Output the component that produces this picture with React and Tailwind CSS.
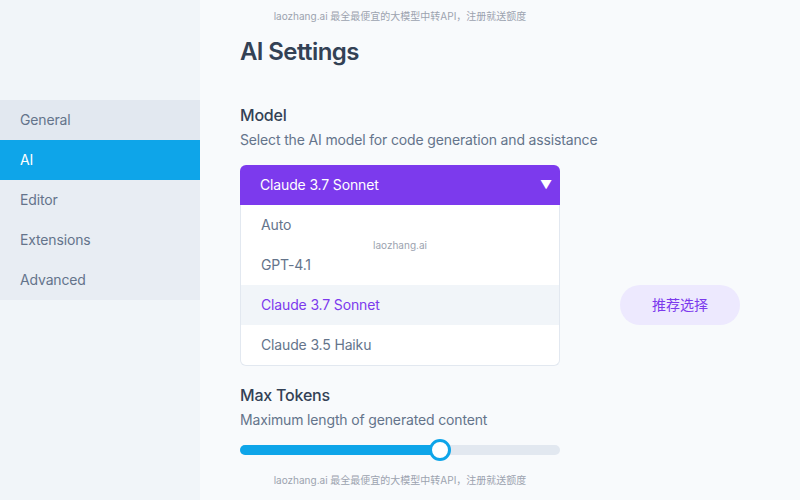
import React, { useState } from 'react';

const NAV = ['General', 'AI', 'Editor', 'Extensions', 'Advanced'];
const MODELS = ['Auto', 'GPT-4.1', 'Claude 3.7 Sonnet', 'Claude 3.5 Haiku'];
const WATERMARK = 'laozhang.ai 最全最便宜的大模型中转API，注册就送额度';

const Sidebar = ({ active }) => (
  <aside className="w-[200px] shrink-0 bg-[#f1f5f9] pt-[100px]">
    {NAV.map((item) => (
      <div
        key={item}
        className={`h-10 flex items-center px-5 text-sm tracking-[-0.15px] ${
          item === active
            ? 'bg-[#0ea5e9] text-white'
            : item === 'General'
              ? 'bg-[#e2e8f0] text-[#64748b]'
              : 'bg-[#e8edf3] text-[#64748b]'
        }`}
      >
        {item}
      </div>
    ))}
  </aside>
);

export default function App() {
  const [model] = useState('Claude 3.7 Sonnet');
  const tokens = 62.5; // percent of slider

  return (
    <div
      className="relative w-[800px] h-[500px] flex overflow-hidden"
      style={{ fontFamily: 'Inter, "Noto Sans CJK SC", sans-serif' }}
    >
      <Sidebar active="AI" />

      <main className="flex-1 bg-[#f8fafc] px-10 pt-[36px]">
        <h1 className="text-2xl leading-8 font-semibold tracking-[-0.6px] text-[#334155]">AI Settings</h1>

        <section className="mt-[35px]">
          <h2 className="text-base leading-6 font-medium tracking-[-0.2px] text-[#334155]">Model</h2>
          <p className="mt-[3px] text-sm leading-5 tracking-[-0.15px] text-[#64748b]">
            Select the AI model for code generation and assistance
          </p>

          <div className="mt-[15px] flex">
            <div className="w-[320px] text-sm tracking-[-0.15px]">
              <div className="h-10 flex items-center justify-between pl-5 pr-2 bg-[#7c3aed] text-white rounded-t-md">
                <span>{model}</span>
                <span className="text-xs">▼</span>
              </div>
              <div className="relative bg-white border border-t-0 border-[#e2e8f0] rounded-b-md overflow-hidden">
                {MODELS.map((m) => (
                  <div
                    key={m}
                    className={`h-10 flex items-center px-5 ${
                      m === model ? 'bg-[#f1f5f9] text-[#7c3aed]' : 'text-[#64748b]'
                    }`}
                  >
                    {m}
                  </div>
                ))}
                <div className="absolute top-[34px] left-0 right-0 text-center text-[10px] leading-3 tracking-normal text-[#9ca3af]">
                  laozhang.ai
                </div>
              </div>
            </div>

            <button className="ml-[60px] mt-[120px] h-10 w-[120px] rounded-full bg-[#ede9fe] text-[#7c3aed] text-sm">
              推荐选择
            </button>
          </div>
        </section>

        <section className="mt-[17px]">
          <h2 className="text-base leading-6 font-medium tracking-[-0.2px] text-[#334155]">Max Tokens</h2>
          <p className="mt-[3px] text-sm leading-5 tracking-[-0.15px] text-[#64748b]">
            Maximum length of generated content
          </p>

          <div className="mt-[15px] relative w-[320px] h-[10px] rounded-full bg-[#e2e8f0]">
            <div className="h-full rounded-full bg-[#0ea5e9]" style={{ width: `${tokens}%` }} />
            <div
              className="absolute top-1/2 w-[22px] h-[22px] -translate-x-1/2 -translate-y-1/2 rounded-full bg-white border-[3px] border-[#0ea5e9]"
              style={{ left: `${tokens}%` }}
            />
          </div>
        </section>
      </main>

      {/* watermarks, centred on the whole page */}
      <div className="absolute top-[10px] left-0 right-0 text-center text-[10px] leading-3 text-[#9ca3af]">
        {WATERMARK}
      </div>
      <div className="absolute bottom-[14px] left-0 right-0 text-center text-[10px] leading-3 text-[#9ca3af]">
        {WATERMARK}
      </div>
    </div>
  );
}
